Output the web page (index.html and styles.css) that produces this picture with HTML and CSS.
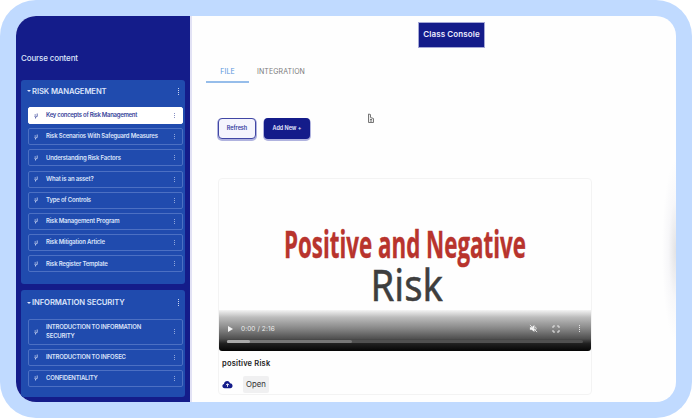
FILE: index.html
```html
<!DOCTYPE html>
<html lang="en">
<head>
<meta charset="utf-8">
<title>Class Console</title>
<link rel="stylesheet" href="styles.css">
</head>
<body>
<svg width="0" height="0" class="symbols"><symbol id="grip" viewBox="0 0 4 6"><path d="M.5 2H2M.5 3.5H1.5M3.2 .5V3.5L1.5 4V5.5"/></symbol></svg>
<div class="frame">
  <div class="app">
    <aside class="sidebar">
      <h1 class="side-title">Course content</h1>
      <section class="group">
        <header class="group-head"><span class="caret"></span><h2>RISK MANAGEMENT</h2><i class="dots large"></i></header>
        <ul class="items">
          <li class="item active"><svg class="grip"><use href="#grip"/></svg><span>Key concepts of Risk Management</span><i class="dots"></i></li>
          <li class="item"><svg class="grip"><use href="#grip"/></svg><span>Risk Scenarios With Safeguard Measures</span><i class="dots"></i></li>
          <li class="item"><svg class="grip"><use href="#grip"/></svg><span>Understanding Risk Factors</span><i class="dots"></i></li>
          <li class="item"><svg class="grip"><use href="#grip"/></svg><span>What is an asset?</span><i class="dots"></i></li>
          <li class="item"><svg class="grip"><use href="#grip"/></svg><span>Type of Controls</span><i class="dots"></i></li>
          <li class="item"><svg class="grip"><use href="#grip"/></svg><span>Risk Management Program</span><i class="dots"></i></li>
          <li class="item"><svg class="grip"><use href="#grip"/></svg><span>Risk Mitigation Article</span><i class="dots"></i></li>
          <li class="item"><svg class="grip"><use href="#grip"/></svg><span>Risk Register Template</span><i class="dots"></i></li>
        </ul>
      </section>
      <section class="group second">
        <header class="group-head"><span class="caret"></span><h2>INFORMATION SECURITY</h2><i class="dots large"></i></header>
        <ul class="items">
          <li class="item tall"><svg class="grip"><use href="#grip"/></svg><span>INTRODUCTION TO INFORMATION<br>SECURITY</span><i class="dots"></i></li>
          <li class="item"><svg class="grip"><use href="#grip"/></svg><span>INTRODUCTION TO INFOSEC</span><i class="dots"></i></li>
          <li class="item"><svg class="grip"><use href="#grip"/></svg><span>CONFIDENTIALITY</span><i class="dots"></i></li>
        </ul>
      </section>
    </aside>
    <main class="main">
      <div class="topbar"><button class="console">Class Console</button></div>
      <nav class="tabs"><a class="tab selected">FILE</a><a class="tab">INTEGRATION</a></nav>
      <div class="actions"><button class="btn outline">Refresh</button><button class="btn solid">Add New +</button></div>
      <article class="card">
        <div class="video">
          <svg class="slide" viewBox="0 0 372 131" role="img">
            <text class="slide-a" x="65" y="79" textLength="242" lengthAdjust="spacingAndGlyphs">Positive and Negative</text>
            <text class="slide-b" x="151.5" y="122" textLength="72.5" lengthAdjust="spacingAndGlyphs">Risk</text>
          </svg>
          <div class="controls">
            <div class="control-row">
              <svg class="play" viewBox="0 0 5 6"><path d="M0 0L5 3L0 6Z"/></svg>
              <span class="time">0:00 / 2:16</span>
              <svg class="mute" viewBox="0 0 10 10"><path d="M1 3.5H3L6 1V9L3 6.5H1Z"/><path class="line" d="M7 3Q9 5 7 7M1 1L9 9"/></svg>
              <svg class="full" viewBox="0 0 8 8"><path class="line" d="M1 3V1H3M5 1H7V3M7 5V7H5M3 7H1V5"/></svg>
              <i class="dots video-dots"></i>
            </div>
            <div class="track"><div class="buffer"><div class="played"></div></div></div>
          </div>
        </div>
        <h3>positive Risk</h3>
        <div class="card-actions">
          <svg class="cloud" viewBox="0 0 12 9"><path d="M3 8.5C-.3 8.5-.3 4.5 2.2 4C2.3.2 7.8-.4 8.7 3C12.4 3 12.4 8.5 9 8.5Z"/><path class="arrow" d="M6 7V4M4.4 5.2L6 3.6L7.6 5.2"/></svg>
          <button class="open">Open</button>
        </div>
      </article>
      <svg class="cursor" viewBox="0 0 8 12"><path d="M1.5 1V9.5H6.5V5.5L3.5 4.5V1.5ZM3 6.5H5M3 8H5"/></svg>
      <div class="edge-shade"></div>
    </main>
  </div>
</div>
</body>
</html>
```
FILE: styles.css
```css
* { box-sizing: border-box; }
body { margin: 0; background: #fff; font-family: Inter, "Liberation Sans", sans-serif; overflow: hidden; }
h1, h2, h3, ul { margin: 0; padding: 0; font-weight: 400; }
button { font-family: inherit; margin: 0; padding: 0; border: 0; }
.symbols { display: none; }
.frame { width: 692px; height: 418px; padding: 16px; border-radius: 36px; background: #c0daff; }
.app { display: flex; height: 386px; border-radius: 20px; overflow: hidden; background: #fefefe; }

.sidebar { width: 174px; flex: none; background: #141c8a; color: #dce4fa; padding: 0 5px; }
.side-title { height: 63.5px; padding-top: 37px; font-size: 8px; font-weight: 500; line-height: 10px; letter-spacing: -.14px; white-space: nowrap; }
.group { height: 204px; background: #204bae; border-radius: 3px; padding: 0 2px 0 6px; }
.group.second { height: 107px; margin-top: 6.5px; }
.group-head { display: flex; align-items: center; height: 27.5px; padding: 0 4px 4px 0; }
.group-head h2 { flex: 1; font-size: 7.7px; font-weight: 600; letter-spacing: -.12px; white-space: nowrap; }
.second .group-head { height: 28.5px; padding-bottom: 3px; }
.caret { border: 2px solid transparent; border-top: 2px solid #dce4fa; border-bottom: 0; margin-right: 1px; }
.items { list-style: none; display: flex; flex-direction: column; gap: 4.2px; margin-left: .5px; }
.item { display: flex; align-items: center; height: 17px; border: 1px solid #4c70c3; border-radius: 2px; padding: 0 7px 0 5px; font-size: 6px; font-weight: 600; line-height: 8.6px; white-space: nowrap; }
.item span { flex: 1; letter-spacing: -.2px; }
.item.tall { height: 26px; }
.item.active { background: #fff; border-color: #fff; color: #38459b; }
.item.active span { letter-spacing: -.3px; }
.grip { width: 4px; height: 6px; margin-right: 8.5px; fill: none; stroke: currentColor; stroke-width: .9; opacity: .85; }
.dots { width: 1px; height: 5px; background: repeating-linear-gradient(currentColor 0 1px, transparent 1px 2px); opacity: .6; }
.dots.large { height: 7px; opacity: .9; }

.main { position: relative; flex: 1; border-left: 2px solid #e2e2f5; }
.topbar { height: 49px; padding: 6px 0 0 226px; }
.console { display: block; width: 67px; height: 26px; padding-bottom: 3px; background: #141c8a; border: 1px solid #a5a8d6; color: #eef; font-size: 8px; font-weight: 600; letter-spacing: .1px; white-space: nowrap; }
.tabs { display: flex; height: 52px; padding-left: 14px; align-items: flex-start; }
.tab { height: 18px; padding: 1px 8px 0; font-size: 7px; line-height: 11px; color: #7c7c7c; letter-spacing: .1px; }
.tab.selected { width: 43px; padding: 1px 0 0; text-align: center; border-bottom: 2px solid #96bdea; color: #5795dc; }
.actions { display: flex; gap: 8px; height: 60.5px; padding: .5px 0 0 26px; }
.btn { height: 21px; border-radius: 4px; font-size: 5.5px; font-weight: 600; letter-spacing: -.05px; box-shadow: 0 1px 0 1px #b0b3df; white-space: nowrap; }
.outline { width: 38px; border: 1.5px solid #4147a4; background: #f5f5fd; color: #343ca0; }
.solid { width: 46px; background: #141c8a; color: #e8eaff; }

.card { width: 374px; height: 217px; margin-left: 26px; border: 1px solid #f3f3f3; border-radius: 4px; }
.video { height: 172px; display: flex; flex-direction: column; }
.slide { display: block; width: 372px; height: 131px; flex: none; overflow: visible; }
.slide-a { font: 700 37px "Open Sans", sans-serif; fill: #b8342d; stroke: #b8342d; stroke-width: .4px; }
.slide-b { font: 400 43px "Noto Sans", sans-serif; fill: #3e3e3e; stroke: #3e3e3e; stroke-width: .5px; }
.controls { flex: 1; padding: 14px 8px 0; border-radius: 0 0 3px 3px; background: linear-gradient(#f4f4f4 0, #bbb 18%, #858585 46%, #505050 70%, #202020 82%, #050505 100%); }
.control-row { display: flex; align-items: center; height: 10px; color: #eee; }
.control-row svg { fill: #f5f5f5; flex: none; }
.control-row .line { fill: none; stroke: #e5e5e5; stroke-width: 1; }
.play { width: 5px; height: 6px; margin-left: 1px; }
.time { flex: 1; margin-left: 8px; font-size: 6.5px; letter-spacing: .1px; }
.mute { width: 9px; height: 9px; margin-right: 14px; }
.full { width: 8px; height: 8px; margin-right: 19px; }
.video-dots { height: 7px; margin-right: 3px; opacity: .9; }
.track { height: 3.5px; margin-top: 6px; border-radius: 2px; background: #505050; }
.buffer { width: 125px; height: 100%; border-radius: 2px; background: #777; }
.played { width: 23px; height: 100%; border-radius: 2px; background: #aaa; }
.card h3 { margin: 8px 0 0 3px; font-size: 7.5px; font-weight: 600; line-height: 10px; letter-spacing: .2px; color: #222; }
.card-actions { display: flex; align-items: center; gap: 10px; padding: 7px 0 0 3px; }
.cloud { width: 11px; height: 9px; fill: #141c8a; }
.cloud .arrow { fill: none; stroke: #fff; stroke-width: 1; }
.open { width: 26px; height: 17px; background: #f0f0f1; border-radius: 2px; color: #333; font-size: 7.8px; }
.cursor { position: absolute; left: 175px; top: 97px; width: 8px; height: 12px; fill: #eee; stroke: #777; stroke-width: 1; }
.edge-shade { position: absolute; right: 0; top: 140px; width: 18px; height: 210px; background: radial-gradient(ellipse 14px 90px at 100% 45%, #e2e2e4, #f7f7f9 55%, #fefefe 100%); }
```
